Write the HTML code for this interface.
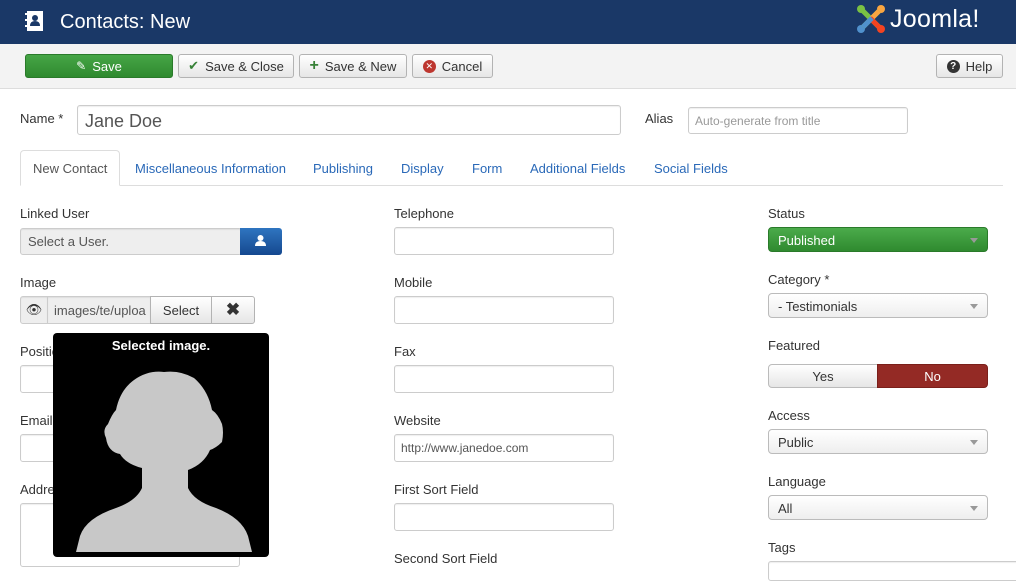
<!DOCTYPE html>
<html><head><meta charset="utf-8"><style>
*{box-sizing:border-box;margin:0;padding:0}
body{width:1016px;height:568px;overflow:hidden;background:#fff;font-family:"Liberation Sans",Arial,sans-serif;font-size:13px;color:#333;position:relative}
.a{position:absolute}
.hdr{left:0;top:0;width:1016px;height:44px;background:#1a3867}
.tb{left:0;top:44px;width:1016px;height:45px;background:#f3f3f3;border-bottom:1px solid #ddd}
.btn{position:absolute;top:54px;height:24px;border:1px solid #b3b3b3;border-radius:3px;background:linear-gradient(#fff,#e6e6e6);font-size:13px;color:#333;display:flex;align-items:center;justify-content:center;gap:6px}
.lbl{position:absolute;font-size:13px;color:#333}
.in{position:absolute;border:1px solid #ccc;border-radius:3px;background:#fff;height:28px;box-shadow:inset 0 1px 1px rgba(0,0,0,.07)}
.sel{position:absolute;height:25px;border:1px solid #bbb;border-radius:4px;background:linear-gradient(#fff,#eee);font-size:13px;padding:5px 9px;color:#333}
.sel:after{content:"";position:absolute;right:9px;top:10px;border:4px solid transparent;border-top:5px solid #999}
.tab{position:absolute;top:161px;font-size:13px;color:#2a69b8}
</style></head><body>
<div class="a hdr"></div>
<svg class="a" style="left:25px;top:10px" width="20" height="22" viewBox="0 0 20 22"><rect x="2" y="1" width="16" height="20" fill="#fff"/><rect x="0" y="3" width="3" height="2" fill="#fff"/><rect x="0" y="9" width="3" height="2" fill="#fff"/><rect x="0" y="15" width="3" height="2" fill="#fff"/><circle cx="10" cy="8" r="3" fill="#1a3867"/><path d="M5 16q0-5 5-5t5 5z" fill="#1a3867"/></svg>
<div class="a" style="left:60px;top:11px;font-size:20px;color:#fff">Contacts: New</div>
<svg class="a" style="left:855px;top:3px" width="32" height="32" viewBox="0 0 32 32"><circle cx="6" cy="6" r="4" fill="#7ac143"/><circle cx="26" cy="6" r="4" fill="#f9a541"/><circle cx="26" cy="26" r="4" fill="#f44321"/><circle cx="6" cy="26" r="4" fill="#5091cd"/><path d="M8 8l8 8M24 8l-8 8M24 24l-8-8M8 24l8-8" stroke-width="5" stroke="#7ac143"/><path d="M24 8l-9 9" stroke="#f9a541" stroke-width="5"/><path d="M24 24l-9-9" stroke="#f44321" stroke-width="5"/><path d="M8 24l9-9" stroke="#5091cd" stroke-width="5"/></svg>
<div class="a" style="left:890px;top:5px;font-size:25px;color:#fff;letter-spacing:0.3px">Joomla!</div>
<div class="a tb"></div>
<div class="btn" style="left:25px;width:148px;background:linear-gradient(#46a546,#2f8a2f);border-color:#2a7a2a;color:#fff"><span style="font-size:12px">&#9998;</span>Save</div>
<div class="btn" style="left:178px;width:116px"><span style="color:#378137">&#10004;</span>Save &amp; Close</div>
<div class="btn" style="left:299px;width:108px"><span style="color:#378137;font-weight:bold;font-size:16px">+</span>Save &amp; New</div>
<div class="btn" style="left:412px;width:81px"><span style="display:inline-block;width:13px;height:13px;border-radius:50%;background:#bd362f;color:#fff;font-size:9px;line-height:13px;text-align:center">&#10005;</span>Cancel</div>
<div class="btn" style="left:936px;width:67px"><span style="display:inline-block;width:13px;height:13px;border-radius:50%;background:#333;color:#fff;font-size:10px;line-height:13px;text-align:center;font-weight:bold">?</span>Help</div>

<div class="lbl" style="left:20px;top:111px">Name *</div>
<div class="in" style="left:77px;top:105px;width:544px;height:30px;font-size:18px;padding:5px 7px;color:#555">Jane Doe</div>
<div class="lbl" style="left:645px;top:111px">Alias</div>
<div class="in" style="left:688px;top:107px;width:220px;height:27px;font-size:12px;padding:6px 6px;color:#999">Auto-generate from title</div>

<div class="a" style="left:20px;top:185px;width:983px;border-top:1px solid #ddd"></div>
<div class="a" style="left:20px;top:150px;width:100px;height:36px;border:1px solid #ddd;border-bottom:1px solid #fff;border-radius:4px 4px 0 0;background:#fff"></div>
<div class="tab" style="left:33px;color:#555">New Contact</div>
<div class="tab" style="left:135px">Miscellaneous Information</div>
<div class="tab" style="left:313px">Publishing</div>
<div class="tab" style="left:401px">Display</div>
<div class="tab" style="left:472px">Form</div>
<div class="tab" style="left:530px">Additional Fields</div>
<div class="tab" style="left:654px">Social Fields</div>

<div class="lbl" style="left:20px;top:206px">Linked User</div>
<div class="in" style="left:20px;top:228px;width:222px;height:27px;background:#eee;padding:5px 7px;color:#555">Select a User.</div>
<div class="a" style="left:240px;top:228px;width:42px;height:27px;background:linear-gradient(#2f75c0,#15488f);border-radius:0 3px 3px 0"></div>
<svg class="a" style="left:254px;top:234px" width="13" height="13" viewBox="0 0 13 13"><circle cx="6.5" cy="4" r="3" fill="#fff"/><path d="M1 12q0-5 5.5-5t5.5 5z" fill="#fff"/></svg>
<div class="lbl" style="left:20px;top:275px">Image</div>
<div class="in" style="left:20px;top:296px;width:28px;height:28px;background:#eee;border-radius:3px 0 0 3px;text-align:center;padding-top:5px;font-size:13px">&#128065;</div>
<div class="in" style="left:47px;top:296px;width:104px;height:28px;border-radius:0;padding:6px 6px;color:#555;overflow:hidden;white-space:nowrap;background:#eee">images/te/uploa</div>
<div class="btn" style="left:150px;top:296px;width:62px;height:28px;border-radius:0;font-size:13px">Select</div>
<div class="btn" style="left:211px;top:296px;width:44px;height:28px;border-radius:0 3px 3px 0;font-size:17px;font-weight:bold">&#10006;</div>
<div class="lbl" style="left:20px;top:344px">Position</div>
<div class="in" style="left:20px;top:365px;width:220px"></div>
<div class="lbl" style="left:20px;top:413px">Email</div>
<div class="in" style="left:20px;top:434px;width:220px"></div>
<div class="lbl" style="left:20px;top:482px">Address</div>
<div class="in" style="left:20px;top:503px;width:220px;height:64px"></div>

<div class="a" style="left:53px;top:333px;width:216px;height:224px;background:#000;border-radius:4px"></div>
<div class="a" style="left:53px;top:338px;width:216px;text-align:center;color:#fff;font-weight:bold;font-size:13px">Selected image.</div>
<svg class="a" style="left:76px;top:368px" width="176" height="184" viewBox="0 0 176 184"><path d="M0 184 L4 168 Q10 150 40 140 Q60 133 66 120 L66 100 Q50 96 44 86 Q32 84 30 70 Q26 62 32 56 Q36 46 40 42 Q44 22 58 12 Q72 2 88 4 Q104 2 118 10 Q132 22 136 42 Q142 46 146 56 Q148 64 146 74 Q140 80 134 82 Q128 96 112 102 L112 120 Q118 133 140 140 Q166 150 172 168 L176 184 Z" fill="#c8c8c8"/></svg>

<div class="lbl" style="left:394px;top:206px">Telephone</div>
<div class="in" style="left:394px;top:227px;width:220px"></div>
<div class="lbl" style="left:394px;top:275px">Mobile</div>
<div class="in" style="left:394px;top:296px;width:220px"></div>
<div class="lbl" style="left:394px;top:344px">Fax</div>
<div class="in" style="left:394px;top:365px;width:220px"></div>
<div class="lbl" style="left:394px;top:413px">Website</div>
<div class="in" style="left:394px;top:434px;width:220px;padding:6px 6px;font-size:12px;color:#555">http://www.janedoe.com</div>
<div class="lbl" style="left:394px;top:482px">First Sort Field</div>
<div class="in" style="left:394px;top:503px;width:220px"></div>
<div class="lbl" style="left:394px;top:551px">Second Sort Field</div>

<div class="lbl" style="left:768px;top:206px">Status</div>
<div class="sel" style="left:768px;top:227px;width:220px;background:linear-gradient(#4bab4b,#2f8a2f);border-color:#2a7a2a;color:#fff">Published</div>
<div class="lbl" style="left:768px;top:272px">Category *</div>
<div class="sel" style="left:768px;top:293px;width:220px">- Testimonials</div>
<div class="lbl" style="left:768px;top:338px">Featured</div>
<div class="a" style="left:768px;top:364px;width:110px;height:24px;border:1px solid #bbb;border-radius:4px 0 0 4px;background:linear-gradient(#fff,#e6e6e6);text-align:center;padding-top:4px">Yes</div>
<div class="a" style="left:877px;top:364px;width:111px;height:24px;border:1px solid #7a1f1a;border-radius:0 4px 4px 0;background:#942a25;color:#fff;text-align:center;padding-top:4px">No</div>
<div class="lbl" style="left:768px;top:408px">Access</div>
<div class="sel" style="left:768px;top:429px;width:220px">Public</div>
<div class="lbl" style="left:768px;top:474px">Language</div>
<div class="sel" style="left:768px;top:495px;width:220px">All</div>
<div class="lbl" style="left:768px;top:540px">Tags</div>
<div class="in" style="left:768px;top:561px;width:260px;height:20px"></div>
</body></html>
